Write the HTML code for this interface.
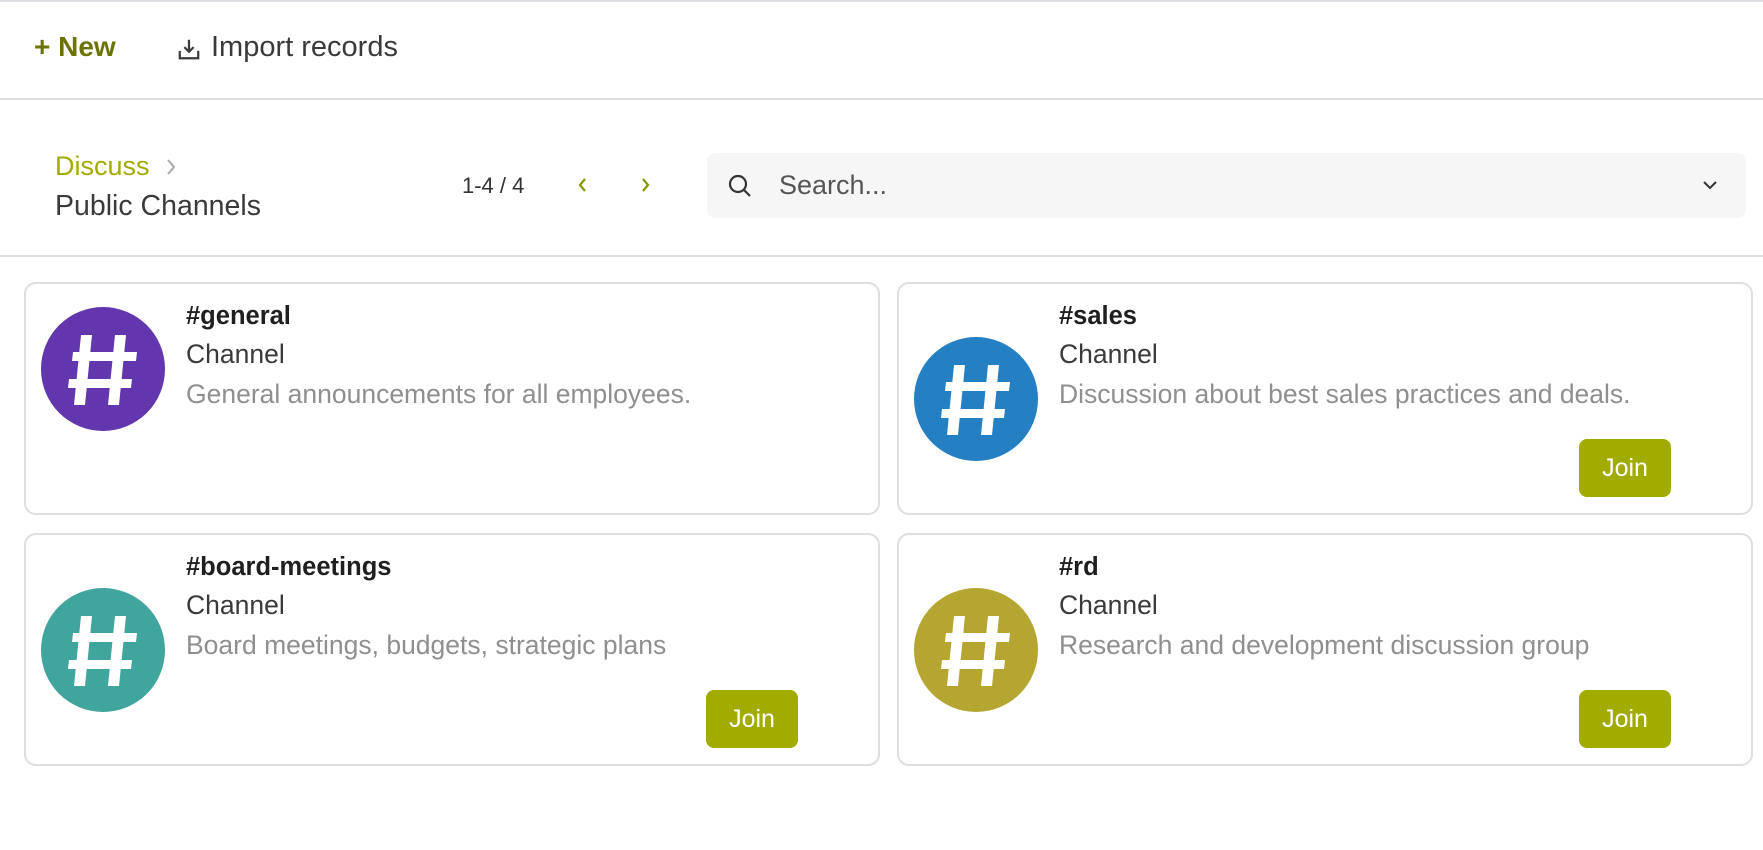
<!DOCTYPE html>
<html><head><meta charset="utf-8"><style>
*{box-sizing:border-box;margin:0;padding:0}
body{width:1763px;height:850px;background:#fff;font-family:"Liberation Sans",sans-serif;position:relative;overflow:hidden}
.abs{position:absolute}
.line{position:absolute;left:0;width:1763px;height:2px;background:#dedee2}
.card{position:absolute;width:856px;height:233px;border:2px solid #dedee2;border-radius:12px;background:#fff}
.av{position:absolute;left:15px;width:124px;height:124px}
.t{position:absolute;left:160px;font-size:26.5px;color:#1f1f1f;white-space:nowrap}
.title{font-weight:bold;top:18px;font-size:25.5px}
.ch{top:55px;color:#3a3a3a}
.desc{top:95px;color:#8f8f8f}
.join{position:absolute;left:680px;top:155px;width:92px;height:58px;background:#a1ab00;color:#fff;border-radius:8px;font-size:25px;text-align:center;line-height:58px}
</style></head><body>
<div class="line" style="top:0"></div>
<div class="abs" style="left:34px;top:31px;font-size:28px;font-weight:bold;color:#6b7400">+ New</div>
<svg class="abs" style="left:177px;top:37px" width="24" height="24" viewBox="0 0 26 26" fill="none" stroke="#3a3a3a" stroke-width="2.4"><path d="M13 3v13M8 11l5 5 5-5M3 15v8h20v-8"/></svg>
<div class="abs" style="left:211px;top:31px;font-size:29px;color:#3a3a3a">Import records</div>
<div class="line" style="top:98px"></div>
<div class="abs" style="left:55px;top:151px;font-size:27px;color:#a1ab00">Discuss</div>
<svg class="abs" style="left:165px;top:158px" width="12" height="18" viewBox="0 0 12 18" fill="none" stroke="#aaa" stroke-width="2"><path d="M3 2l6 7-6 7"/></svg>
<div class="abs" style="left:55px;top:190px;font-size:28.5px;color:#3a3a3a">Public Channels</div>
<div class="abs" style="left:462px;top:173px;font-size:22px;color:#333">1-4 / 4</div>
<svg class="abs" style="left:578px;top:177px" width="10" height="16" viewBox="0 0 10 16" fill="none" stroke="#8a9400" stroke-width="2.2"><path d="M7 2l-5 6 5 6"/></svg>
<svg class="abs" style="left:640px;top:177px" width="10" height="16" viewBox="0 0 10 16" fill="none" stroke="#8a9400" stroke-width="2.2"><path d="M3 2l5 6-5 6"/></svg>
<div class="abs" style="left:707px;top:153px;width:1039px;height:65px;background:#f6f6f6;border-radius:8px"></div>
<svg class="abs" style="left:727px;top:173px" width="26" height="26" viewBox="0 0 26 26" fill="none" stroke="#333" stroke-width="2.2"><circle cx="11" cy="11" r="8"/><path d="M17 17l6 6"/></svg>
<div class="abs" style="left:779px;top:170px;font-size:27px;color:#555">Search...</div>
<svg class="abs" style="left:1702px;top:179px" width="16" height="12" viewBox="0 0 16 12" fill="none" stroke="#333" stroke-width="2"><path d="M2 3l6 6 6-6"/></svg>
<div class="line" style="top:255px"></div>

<svg width="0" height="0" style="position:absolute"><defs><g id="h" fill="#fff"><polygon points="40,28 51,28 44,98 33,98"/><polygon points="74,28 85,28 78,98 67,98"/><polygon points="32,45 96,45 95,54 31,54"/><polygon points="28,72 91,72 90,81 27,81"/></g></defs></svg>

<div class="card" style="left:24px;top:282px">
<svg class="av" style="top:23px" viewBox="0 0 124 124"><circle cx="62" cy="62" r="62" fill="#6236ad"/><use href="#h"/></svg>
<div class="t title">#general</div><div class="t ch">Channel</div><div class="t desc">General announcements for all employees.</div>
</div>
<div class="card" style="left:897px;top:282px">
<svg class="av" style="top:53px" viewBox="0 0 124 124"><circle cx="62" cy="62" r="62" fill="#2580c3"/><use href="#h"/></svg>
<div class="t title">#sales</div><div class="t ch">Channel</div><div class="t desc">Discussion about best sales practices and deals.</div>
<div class="join">Join</div>
</div>
<div class="card" style="left:24px;top:533px">
<svg class="av" style="top:53px" viewBox="0 0 124 124"><circle cx="62" cy="62" r="62" fill="#40a59d"/><use href="#h"/></svg>
<div class="t title">#board-meetings</div><div class="t ch">Channel</div><div class="t desc">Board meetings, budgets, strategic plans</div>
<div class="join">Join</div>
</div>
<div class="card" style="left:897px;top:533px">
<svg class="av" style="top:53px" viewBox="0 0 124 124"><circle cx="62" cy="62" r="62" fill="#b5a632"/><use href="#h"/></svg>
<div class="t title">#rd</div><div class="t ch">Channel</div><div class="t desc">Research and development discussion group</div>
<div class="join">Join</div>
</div>
</body></html>
